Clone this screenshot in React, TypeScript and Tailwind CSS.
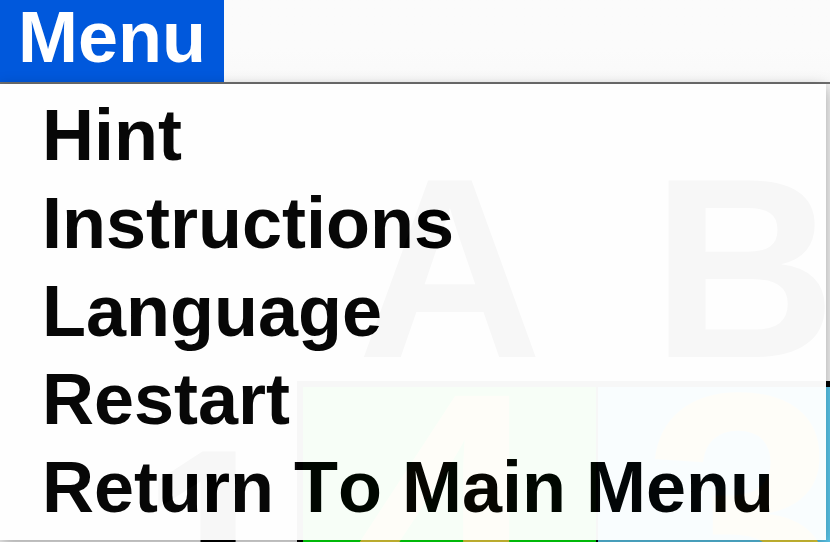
const items = ["Hint", "Instructions", "Language", "Restart", "Return To Main Menu"];

const cells = [
  { value: "4", color: "bg-[#00ee0c]" },
  { value: "3", color: "bg-[#5ccbf0]" },
];

function MenuBar() {
  return (
    <nav className="relative z-10 border-b-2 border-[#707070] bg-linear-to-b from-[#fbfbfb] from-60% to-[#f9f9f9]">
      <button
        type="button"
        aria-haspopup="menu"
        aria-expanded="true"
        className="block h-[82px] bg-[#0058dc] px-[18px] text-[72px] font-bold text-white"
      >
        <span className="block h-[82px] leading-[74px]">Menu</span>
      </button>
      <div
        role="menu"
        className="absolute top-[84px] left-0 w-[calc(100%-4px)] bg-white pt-[7px] pb-[9px] opacity-97 shadow-[0_4px_14px_rgba(0,0,0,0.35)]"
      >
        {items.map((item) => (
          <button
            key={item}
            type="button"
            role="menuitem"
            className="block h-[88px] w-full px-[42px] text-left text-[72px] leading-[88px] font-bold text-black"
          >
            {item}
          </button>
        ))}
      </div>
    </nav>
  );
}

function Board() {
  return (
    <main className="grid grid-cols-[297px_594px] grid-rows-[297px_300px] font-bold text-black">
      <div />
      <div className="grid grid-cols-2 pt-9 pl-[6px] text-center text-[256px] leading-[297px]">
        <span>A</span>
        <span>B</span>
      </div>
      <div className="pt-2 pr-[14px] text-right text-[256px] leading-[300px]">1</div>
      <div className="grid grid-cols-2 gap-[2px] border-t-[6px] border-l-[6px] border-black bg-black text-center text-[352px] leading-[258px] text-[#f0dc3c]">
        {cells.map((cell) => (
          <div key={cell.value} className={`pr-2 ${cell.color}`}>
            {cell.value}
          </div>
        ))}
      </div>
    </main>
  );
}

export default function App() {
  return (
    <div className="h-screen overflow-hidden bg-[#f4f4f4] font-['Liberation_Sans',Arial,sans-serif] [font-kerning:none]">
      <MenuBar />
      <Board />
    </div>
  );
}
